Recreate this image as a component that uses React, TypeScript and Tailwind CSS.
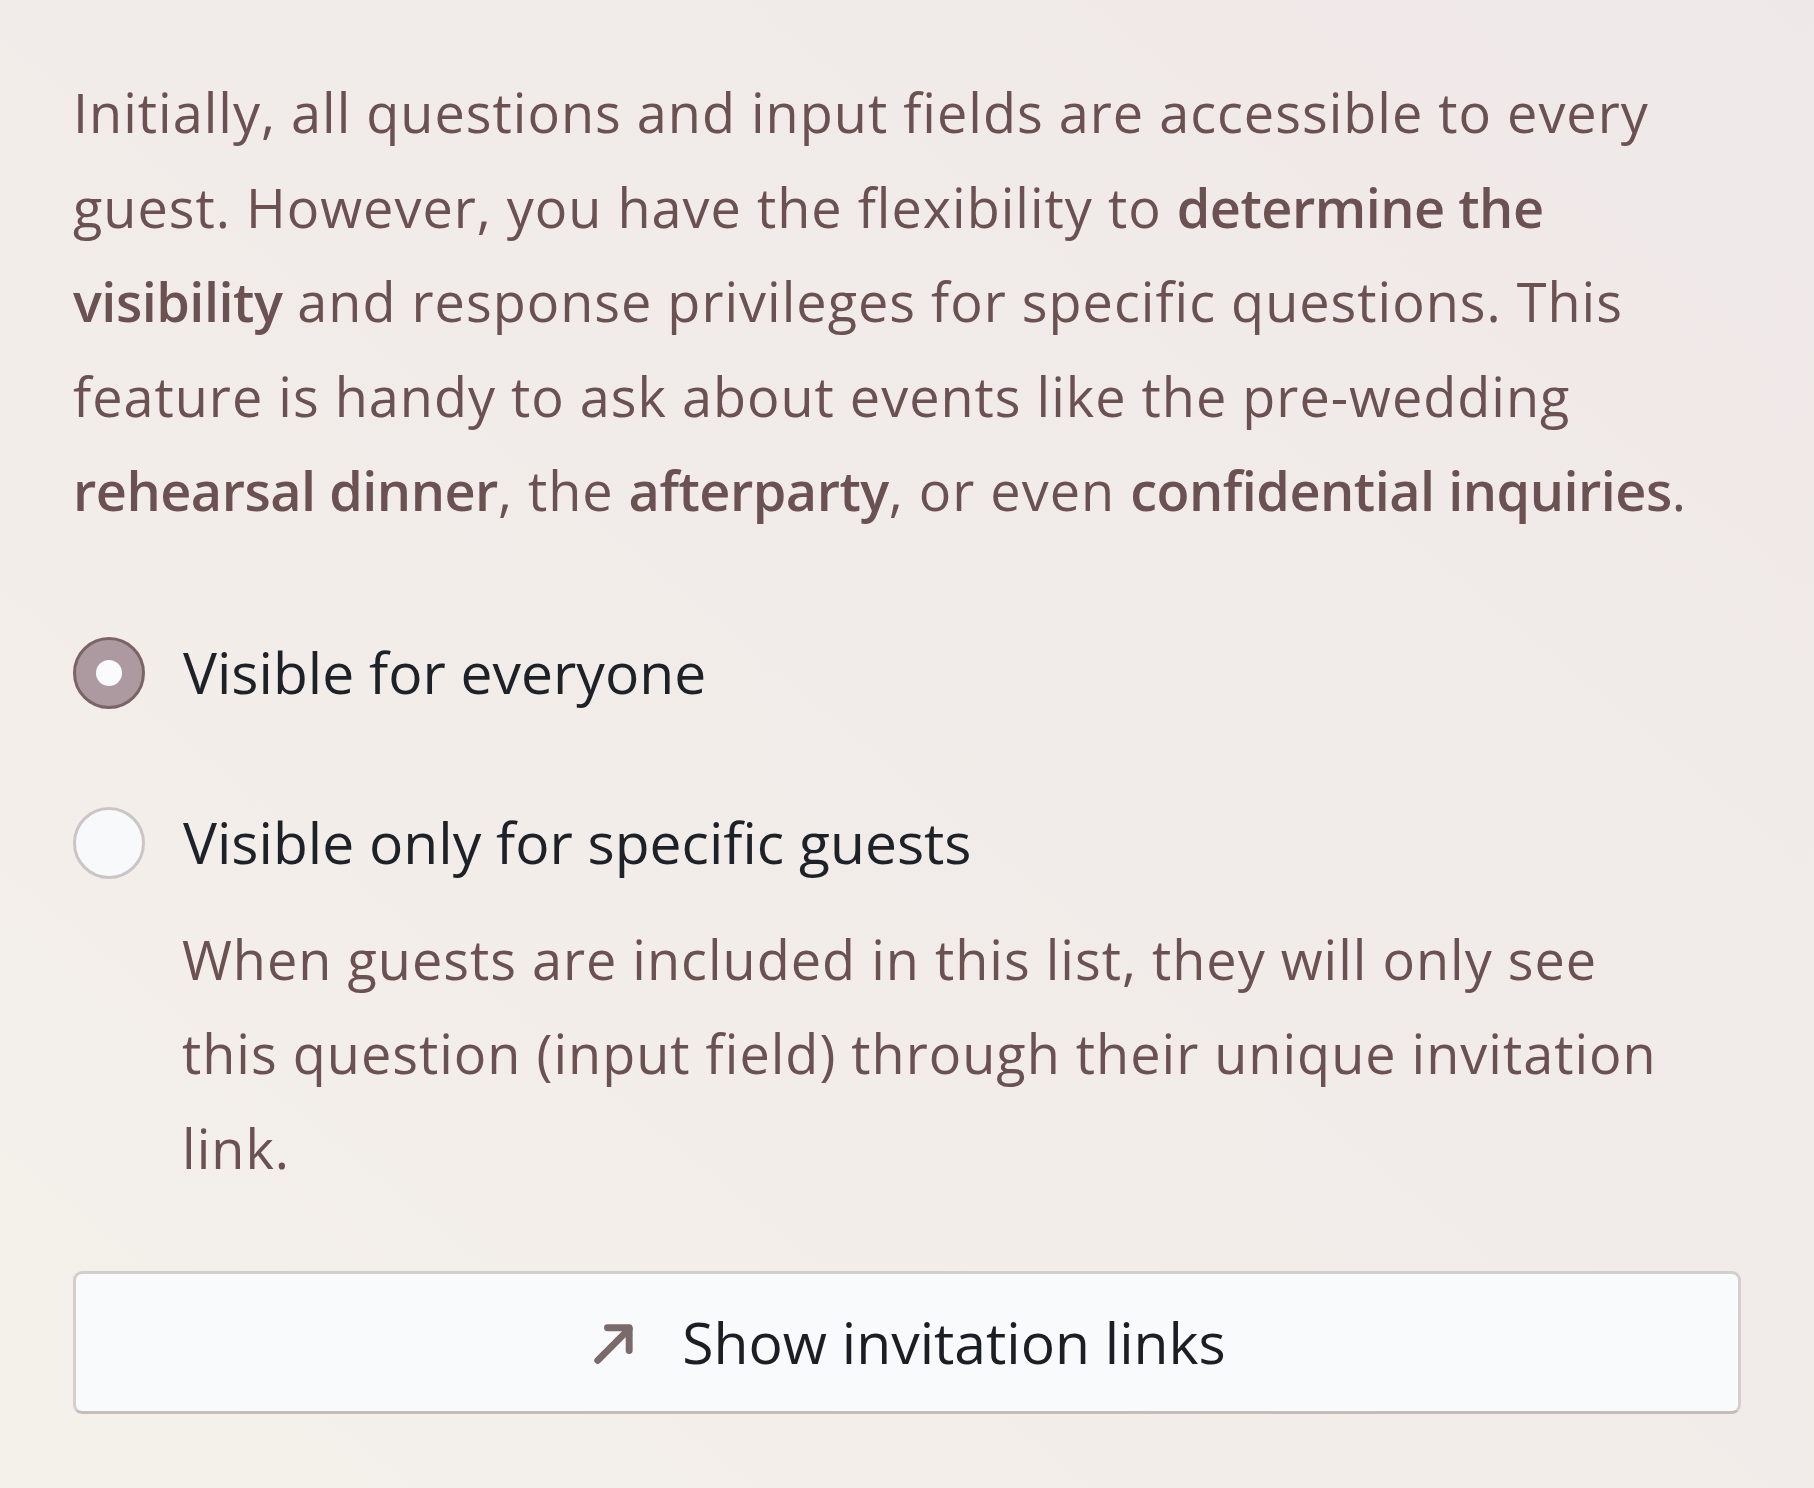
import React from "react";

function Radio({ checked }: { checked?: boolean }) {
  if (checked) {
    return (
      <span className="flex h-[72px] w-[72px] shrink-0 items-center justify-center rounded-full border-[3px] border-[#7b6467] bg-[#ad9aa0]">
        <span className="h-[26px] w-[26px] rounded-full bg-[#fafbfd]" />
      </span>
    );
  }
  return <span className="h-[72px] w-[72px] shrink-0 rounded-full border-[3px] border-[#cbc6c5] bg-[#f8f9fb]" />;
}

export default function App() {
  return (
    <div
      className="min-h-[1488px] w-full bg-gradient-to-tr from-[#f4f0ea] to-[#efe8e8] px-[73px] pt-[65px] text-[#6b5152]"
      style={{ fontFamily: "'Open Sans', 'Noto Sans', sans-serif" }}
    >
      <p className="max-w-[1650px] text-[54px] leading-[94.5px] tracking-[1px]">
        Initially, all questions and input fields are accessible to every guest. However, you have the flexibility to{" "}
        <b className="font-semibold tracking-[-0.5px]">determine the visibility</b> and response privileges for specific
        questions. This feature is handy to ask about events like the pre-wedding{" "}
        <b className="font-semibold tracking-[-0.5px]">rehearsal dinner</b>, the{" "}
        <b className="font-semibold tracking-[-0.5px]">afterparty</b>, or even{" "}
        <b className="font-semibold tracking-[-0.5px]">confidential inquiries</b>.
      </p>

      <div className="mt-[90px] flex flex-col">
        <label className="flex h-[90px] items-center gap-[38px]">
          <Radio checked />
          <span className="text-[57px] text-[#1d2228]">Visible for everyone</span>
        </label>
        <label className="mt-[80px] flex h-[90px] items-center gap-[38px]">
          <Radio />
          <span className="text-[57px] text-[#1d2228]">Visible only for specific guests</span>
        </label>
        <p className="mt-[24px] max-w-[1612px] pl-[109px] text-[54px] leading-[94.5px] tracking-[1px]">
          When guests are included in this list, they will only see this question (input field) through their unique
          invitation link.
        </p>
      </div>

      <button className="mt-[76px] flex h-[143px] w-full items-center justify-center gap-[42px] rounded-[9px] border-[3px] border-[#d3cfcd] border-b-[#c2bdbb] bg-[#f9fafc] text-[57px] text-[#1b1f24]">
        <svg width="52" height="52" viewBox="0 0 24 24" fill="none" stroke="#7a6a6b" strokeWidth="3.2" strokeLinecap="round" strokeLinejoin="round">
          <path d="M4.5 20 L19 5.5" />
          <path d="M9 5 H19 V15.5" />
        </svg>
        Show invitation links
      </button>
    </div>
  );
}
